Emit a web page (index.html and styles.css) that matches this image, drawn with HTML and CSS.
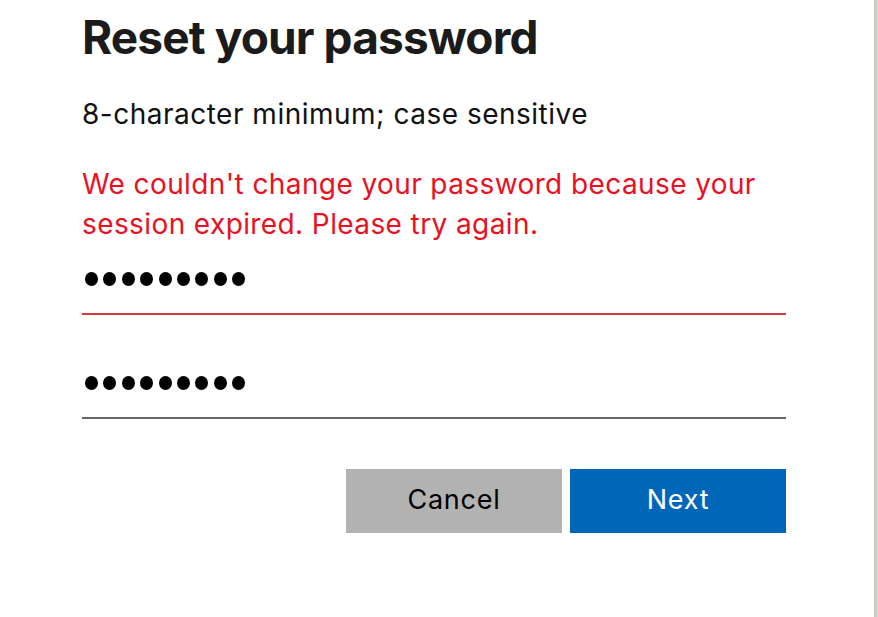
FILE: index.html
```html
<!DOCTYPE html>
<html lang="en">
<head>
<meta charset="utf-8">
<title>Reset your password</title>
<link rel="stylesheet" href="styles.css">
</head>
<body>
<div class="page">
  <main class="content">
    <h1 class="title">Reset your password</h1>
    <p class="hint">8-character minimum; case sensitive</p>
    <p class="error">We couldn't change your password because your session expired. Please try again.</p>
    <div class="field field-error" role="textbox" aria-label="New password">
      <div class="dots"><span class="dot"></span><span class="dot"></span><span class="dot"></span><span class="dot"></span><span class="dot"></span><span class="dot"></span><span class="dot"></span><span class="dot"></span><span class="dot"></span></div>
    </div>
    <div class="field field-second" role="textbox" aria-label="Confirm password">
      <div class="dots"><span class="dot"></span><span class="dot"></span><span class="dot"></span><span class="dot"></span><span class="dot"></span><span class="dot"></span><span class="dot"></span><span class="dot"></span><span class="dot"></span></div>
    </div>
    <div class="actions">
      <button class="btn btn-cancel" type="button">Cancel</button>
      <button class="btn btn-next" type="button">Next</button>
    </div>
  </main>
  <div class="edge"></div>
</div>
</body>
</html>
```

FILE: styles.css
```css
html, body {
  margin: 0;
  padding: 0;
  background: #ffffff;
}

body {
  font-family: Inter, "Liberation Sans", Arial, sans-serif;
  color: #1b1b1b;
}

.page {
  display: flex;
  width: 878px;
  height: 617px;
  overflow: hidden;
}

.content {
  flex: 1;
  padding: 9px 0 0 82px;
}

.edge {
  width: 4px;
  height: 617px;
  background: linear-gradient(to right, #bdbdb5 0, #cfcfc8 1px, #d3d3cc 100%);
}

.title {
  margin: 0;
  font-size: 46px;
  line-height: 56px;
  font-weight: 700;
  letter-spacing: -0.88px;
  color: #1b1b1b;
}

.hint {
  margin: 28.5px 0 0 0;
  font-size: 28px;
  line-height: 40px;
  letter-spacing: 0.5px;
  color: #111111;
}

.error {
  margin: 30px 0 0 0;
  width: 704px;
  font-size: 28px;
  line-height: 40px;
  letter-spacing: 0.4px;
  color: #e81123;
}

.field {
  width: 704px;
  padding: 0 0 27px 0;
  border-bottom: 2px solid #666666;
}

.field-error {
  margin-top: 28.6px;
  border-bottom-color: #d6393d;
}

.field-second {
  margin-top: 61px;
}

.dots {
  display: flex;
  gap: 5.4px;
  padding-left: 3px;
  height: 14px;
}

.dot {
  width: 13px;
  height: 14px;
  border-radius: 50%;
  background: #000000;
}

.actions {
  display: flex;
  justify-content: flex-end;
  gap: 8px;
  width: 704px;
  margin-top: 50px;
}

.btn {
  width: 216px;
  height: 64px;
  border: none;
  padding: 0 0 2px 0;
  margin: 0;
  font-family: Inter, "Liberation Sans", Arial, sans-serif;
  font-size: 27px;
  line-height: 62px;
  letter-spacing: 0.75px;
  cursor: pointer;
}

.btn-cancel {
  background: #b2b2b2;
  color: #000000;
}

.btn-next {
  background: #0067b8;
  color: #ffffff;
}
```
